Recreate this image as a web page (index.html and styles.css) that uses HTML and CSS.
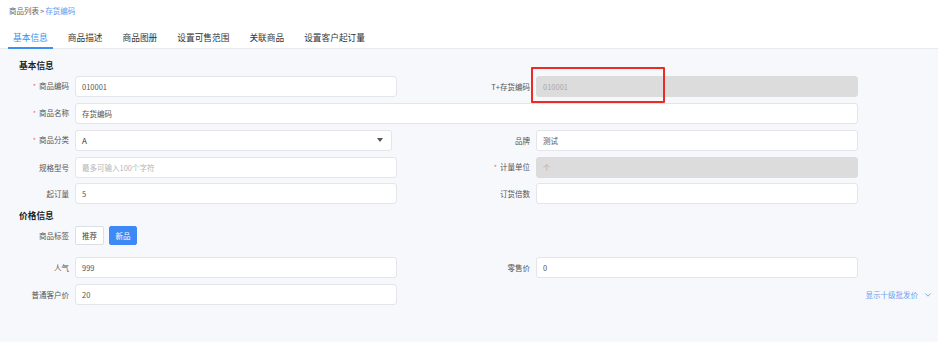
FILE: index.html
```html
<!DOCTYPE html>
<html lang="zh-CN">
<head>
<meta charset="utf-8">
<title>存货编码</title>
<link rel="stylesheet" href="styles.css">
</head>
<body>
<div class="top">
  <div class="crumb"><span class="crumb-gray">商品列表</span><span class="crumb-sep">&gt;</span><span class="crumb-cur">存货编码</span></div>
  <div class="tabs">
    <div class="tab active">基本信息</div>
    <div class="tab">商品描述</div>
    <div class="tab">商品图册</div>
    <div class="tab">设置可售范围</div>
    <div class="tab">关联商品</div>
    <div class="tab">设置客户起订量</div>
  </div>
</div>
<div class="main">
  <div class="sec">基本信息</div>

  <div class="row">
    <label class="lbl"><i class="req">*</i>商品编码</label>
    <div class="inp">010001</div>
    <span></span>
    <label class="lbl">T+存货编码</label>
    <div class="inp dis anno-wrap">010001<span class="anno"></span></div>
  </div>

  <div class="row">
    <label class="lbl"><i class="req">*</i>商品名称</label>
    <div class="inp full">存货编码</div>
  </div>

  <div class="row">
    <label class="lbl"><i class="req">*</i>商品分类</label>
    <div class="inp sel"><span class="sel-val">A</span><span class="caret"></span></div>
    <span></span>
    <label class="lbl">品牌</label>
    <div class="inp">测试</div>
  </div>

  <div class="row">
    <label class="lbl">规格型号</label>
    <div class="inp ph">最多可输入100个字符</div>
    <span></span>
    <label class="lbl"><i class="req">*</i>计量单位</label>
    <div class="inp dis">个</div>
  </div>

  <div class="row">
    <label class="lbl">起订量</label>
    <div class="inp">5</div>
    <span></span>
    <label class="lbl">订货倍数</label>
    <div class="inp"></div>
  </div>

  <div class="sec sec2">价格信息</div>

  <div class="row tagrow">
    <label class="lbl">商品标签</label>
    <div class="tags">
      <span class="tag">推荐</span>
      <span class="tag on">新品</span>
    </div>
  </div>

  <div class="row">
    <label class="lbl">人气</label>
    <div class="inp">999</div>
    <span></span>
    <label class="lbl">零售价</label>
    <div class="inp">0</div>
  </div>

  <div class="row">
    <label class="lbl">普通客户价</label>
    <div class="inp">20</div>
    <span></span>
    <span></span>
    <span></span>
    <a class="more">显示十级批发价<svg class="chev" width="6" height="4" viewBox="0 0 6 4"><polyline points="0.5,0.5 3,3.2 5.5,0.5" fill="none" stroke="#6aa2f2" stroke-width="0.9"/></svg></a>
  </div>
</div>
</body>
</html>
```

FILE: styles.css
```css
html, body {
  margin: 0;
  padding: 0;
}
body {
  width: 938px;
  height: 342px;
  overflow: hidden;
  background: #f7f8fb;
  font-family: "Noto Sans CJK SC", "Noto Sans", sans-serif;
  color: #555;
}
.top {
  background: #fff;
}
.crumb {
  padding: 5px 0 0 9px;
  font-size: 7.5px;
  line-height: 12px;
  height: 12px;
}
.crumb-gray { color: #666; }
.crumb-sep { color: #666; margin: 0 1px; }
.crumb-cur { color: #5b9cf0; }

.tabs {
  display: flex;
  margin-top: 5px;
  padding-left: 8px;
  border-bottom: 1px solid #e8eaee;
}
.tab {
  padding: 10px 5px 3px;
  margin-right: 10px;
  margin-bottom: -1px;
  font-size: 8.7px;
  line-height: 12px;
  color: #333;
  border-bottom: 2px solid transparent;
}
.tab.active {
  color: #3d8ff0;
  border-bottom-color: #3d8ff0;
}

.main {
  padding: 11px 0 0 8px;
}
.sec {
  padding-left: 11px;
  font-size: 8.7px;
  line-height: 12px;
  font-weight: bold;
  color: #222;
  margin-bottom: 3px;
}
.sec2 {
  margin-bottom: 4px;
}
.row {
  display: grid;
  grid-template-columns: 67px 322px 72px 67px 322px 1fr;
  height: 21px;
  margin-bottom: 6px;
  align-items: center;
}
.lbl {
  box-sizing: border-box;
  padding-right: 6px;
  text-align: right;
  font-size: 7.5px;
  line-height: 21px;
  color: #555;
  white-space: nowrap;
}
.req {
  font-style: normal;
  color: #f56c6c;
  margin-right: 3px;
  font-size: 7px;
}
.inp {
  box-sizing: border-box;
  height: 21px;
  background: #fff;
  border: 1px solid #e3e5ea;
  border-radius: 3px;
  padding: 0 6px;
  font-size: 7.5px;
  line-height: 19px;
  color: #555;
}
.inp.full {
  grid-column: 2 / 6;
}
.inp.dis {
  background: #dcdcdc;
  border-color: #dcdcdc;
  color: #a8a8a8;
}
.inp.ph {
  color: #b5b5b5;
}
.inp.sel {
  width: 317px;
  display: flex;
  justify-content: space-between;
  align-items: center;
}
.sel-val {
  color: #333;
  font-size: 8px;
}
.caret {
  width: 0;
  height: 0;
  border-left: 3px solid transparent;
  border-right: 3px solid transparent;
  border-top: 4px solid #555;
  margin-right: 2px;
}
.anno-wrap {
  position: relative;
}
.anno {
  position: absolute;
  box-sizing: border-box;
  left: -6px;
  top: -10px;
  width: 134px;
  height: 36px;
  border-width: 2px;
  border-style: solid;
  border-color: #ec2b25;
  border-radius: 1px;
}
.tagrow {
  height: 19px;
  margin-bottom: 12px;
}
.tagrow .lbl {
  line-height: 19px;
}
.tags {
  display: flex;
  gap: 5px;
}
.tag {
  box-sizing: border-box;
  width: 29px;
  height: 19px;
  line-height: 17px;
  text-align: center;
  font-size: 7.5px;
  color: #444;
  background: #fff;
  border: 1px solid #dcdfe4;
  border-radius: 2px;
}
.tag.on {
  background: #3d8af7;
  border-color: #3d8af7;
  color: #fff;
  width: 28px;
}
.more {
  justify-self: end;
  margin-right: 7px;
  font-size: 7.5px;
  color: #6aa2f2;
  display: flex;
  align-items: center;
  white-space: nowrap;
  position: relative;
  top: 0;
}
.chev {
  margin-left: 7px;
}
```
